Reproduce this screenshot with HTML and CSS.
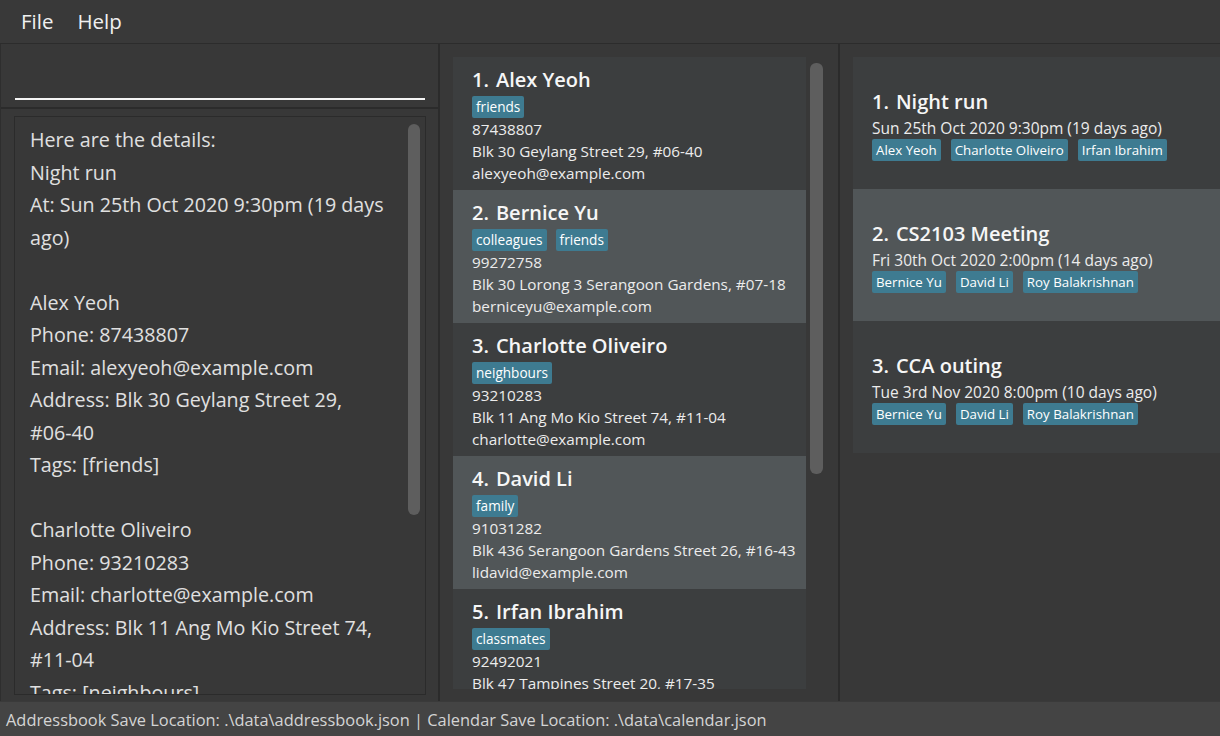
FILE: index.html
```html
<!DOCTYPE html>
<html>
<head>
<meta charset="utf-8">
<link rel="stylesheet" href="styles.css">
</head>
<body>
<div class="app">
  <nav class="menubar">
    <span class="menu-item">File</span>
    <span class="menu-item">Help</span>
  </nav>
  <main class="panes">
    <section class="pane-left">
      <div class="command-box"><div class="command-input"></div></div>
      <div class="result-area">
        <div class="result-box">
          <div class="result-text">
            <div class="rl">Here are the details:</div>
            <div class="rl">Night run</div>
            <div class="rl">At: Sun 25th Oct 2020 9:30pm (19 days</div>
            <div class="rl">ago)</div>
            <div class="rl">&nbsp;</div>
            <div class="rl">Alex Yeoh</div>
            <div class="rl">Phone: 87438807</div>
            <div class="rl">Email: alexyeoh@example.com</div>
            <div class="rl">Address: Blk 30 Geylang Street 29,</div>
            <div class="rl">#06-40</div>
            <div class="rl">Tags: [friends]</div>
            <div class="rl">&nbsp;</div>
            <div class="rl">Charlotte Oliveiro</div>
            <div class="rl">Phone: 93210283</div>
            <div class="rl">Email: charlotte@example.com</div>
            <div class="rl">Address: Blk 11 Ang Mo Kio Street 74,</div>
            <div class="rl">#11-04</div>
            <div class="rl">Tags: [neighbours]</div>
          </div>
          <div class="scroll-thumb result-thumb"></div>
        </div>
      </div>
    </section>

    <section class="pane-mid">
      <div class="person-list">
        <div class="card odd">
          <div class="card-title"><span class="idx">1.</span><span class="name">Alex Yeoh</span></div>
          <div class="tags"><span class="tag">friends</span></div>
          <div class="line">87438807</div>
          <div class="line">Blk 30 Geylang Street 29, #06-40</div>
          <div class="line">alexyeoh@example.com</div>
        </div>
        <div class="card even">
          <div class="card-title"><span class="idx">2.</span><span class="name">Bernice Yu</span></div>
          <div class="tags"><span class="tag">colleagues</span><span class="tag">friends</span></div>
          <div class="line">99272758</div>
          <div class="line">Blk 30 Lorong 3 Serangoon Gardens, #07-18</div>
          <div class="line">berniceyu@example.com</div>
        </div>
        <div class="card odd">
          <div class="card-title"><span class="idx">3.</span><span class="name">Charlotte Oliveiro</span></div>
          <div class="tags"><span class="tag">neighbours</span></div>
          <div class="line">93210283</div>
          <div class="line">Blk 11 Ang Mo Kio Street 74, #11-04</div>
          <div class="line">charlotte@example.com</div>
        </div>
        <div class="card even">
          <div class="card-title"><span class="idx">4.</span><span class="name">David Li</span></div>
          <div class="tags"><span class="tag">family</span></div>
          <div class="line">91031282</div>
          <div class="line">Blk 436 Serangoon Gardens Street 26, #16-43</div>
          <div class="line">lidavid@example.com</div>
        </div>
        <div class="card odd">
          <div class="card-title"><span class="idx">5.</span><span class="name">Irfan Ibrahim</span></div>
          <div class="tags"><span class="tag">classmates</span></div>
          <div class="line">92492021</div>
          <div class="line">Blk 47 Tampines Street 20, #17-35</div>
          <div class="line">irfan@example.com</div>
        </div>
      </div>
      <div class="scroll-thumb list-thumb"></div>
    </section>

    <section class="pane-right">
      <div class="event-list">
        <div class="event odd">
          <div class="card-title"><span class="idx">1.</span><span class="name">Night run</span></div>
          <div class="line">Sun 25th Oct 2020 9:30pm (19 days ago)</div>
          <div class="tags"><span class="tag">Alex Yeoh</span><span class="tag">Charlotte Oliveiro</span><span class="tag">Irfan Ibrahim</span></div>
        </div>
        <div class="event even">
          <div class="card-title"><span class="idx">2.</span><span class="name">CS2103 Meeting</span></div>
          <div class="line">Fri 30th Oct 2020 2:00pm (14 days ago)</div>
          <div class="tags"><span class="tag">Bernice Yu</span><span class="tag">David Li</span><span class="tag">Roy Balakrishnan</span></div>
        </div>
        <div class="event odd">
          <div class="card-title"><span class="idx">3.</span><span class="name">CCA outing</span></div>
          <div class="line">Tue 3rd Nov 2020 8:00pm (10 days ago)</div>
          <div class="tags"><span class="tag">Bernice Yu</span><span class="tag">David Li</span><span class="tag">Roy Balakrishnan</span></div>
        </div>
      </div>
    </section>
  </main>
  <footer class="status-bar">Addressbook Save Location: .\data\addressbook.json | Calendar Save Location: .\data\calendar.json</footer>
</div>
</body>
</html>
```

FILE: styles.css
```css
* { box-sizing: border-box; }
html, body { margin: 0; padding: 0; }
body {
  background: #383838;
  font-family: "Open Sans", "Noto Sans", sans-serif;
  color: #f2f2f2;
}
.app {
  width: 1220px;
  height: 736px;
  display: flex;
  flex-direction: column;
  overflow: hidden;
}
.menubar {
  height: 44px;
  flex: none;
  display: flex;
  align-items: center;
  gap: 24px;
  padding-left: 21px;
  padding-bottom: 2px;
  background: #393939;
  border-bottom: 1px solid #2c2c2c;
  font-size: 20.5px;
  color: #f0f0f0;
}
.panes {
  flex: 1;
  display: flex;
  min-height: 0;
}
.pane-left {
  width: 440px;
  flex: none;
  display: flex;
  flex-direction: column;
  border-left: 1px solid #2e2e2e;
  border-right: 2px solid #2b2b2b;
}
.command-box {
  height: 65px;
  flex: none;
  padding: 0 13px 0 14px;
  border-bottom: 2px solid #2b2b2b;
}
.command-input {
  height: 56px;
  border-bottom: 2px solid #f4f4f4;
}
.result-area {
  flex: 1;
  padding: 7px 12px 6px 13px;
  min-height: 0;
}
.result-box {
  position: relative;
  height: 100%;
  border: 1px solid #2b2b2b;
  overflow: hidden;
  padding: 7px 0 0 15px;
}
.result-text {
  font-size: 19.7px;
  line-height: 32.5px;
  color: #e0e0e0;
  white-space: nowrap;
}
.scroll-thumb {
  position: absolute;
  background: #5e5e5e;
  border-radius: 6px;
}
.result-thumb {
  right: 5px;
  top: 7px;
  width: 12px;
  height: 391px;
}
.pane-mid {
  position: relative;
  width: 400px;
  flex: none;
  padding: 13px 0 12px 13px;
  border-right: 2px solid #2b2b2b;
  overflow: hidden;
}
.person-list {
  width: 353px;
  height: 100%;
  overflow: hidden;
  background: #3c3e3f;
}
.list-thumb {
  left: 370px;
  top: 19px;
  width: 13px;
  height: 411px;
}
.card {
  height: 133px;
  padding: 8px 0 0 19px;
  overflow: hidden;
}
.odd { background: #3c3e3f; }
.even { background: #515658; }
.card-title {
  display: flex;
  gap: 7px;
  font-size: 20px;
  font-weight: 600;
  line-height: 29px;
  color: #f6f6f6;
  white-space: nowrap;
}
.tags {
  display: flex;
  gap: 9px;
  margin-top: 2px;
}
.tag {
  height: 22px;
  padding: 0 4px;
  background: #3e7b91;
  border-radius: 2px;
  font-size: 13.6px;
  line-height: 22px;
  color: #ffffff;
  white-space: nowrap;
}
.line {
  font-size: 15.3px;
  line-height: 22px;
  color: #ececec;
  white-space: nowrap;
}
.pane-right {
  flex: 1;
  padding: 13px 0 0 13px;
  overflow: hidden;
}
.event {
  height: 132px;
  padding-left: 19px;
  padding-top: 1px;
  display: flex;
  flex-direction: column;
  justify-content: center;
}
.event .card-title { line-height: 30px; }
.event .tags { margin-top: 0; gap: 10px; }
.event .tag { font-size: 13.3px; }
.event .line { font-size: 15.5px; }
.status-bar {
  height: 35px;
  flex: none;
  background: #444444;
  border-top: 1px solid #3a3a3a;
  padding-left: 6px;
  font-size: 16.4px;
  line-height: 36px;
  color: #d4d4d4;
  white-space: nowrap;
}
```
